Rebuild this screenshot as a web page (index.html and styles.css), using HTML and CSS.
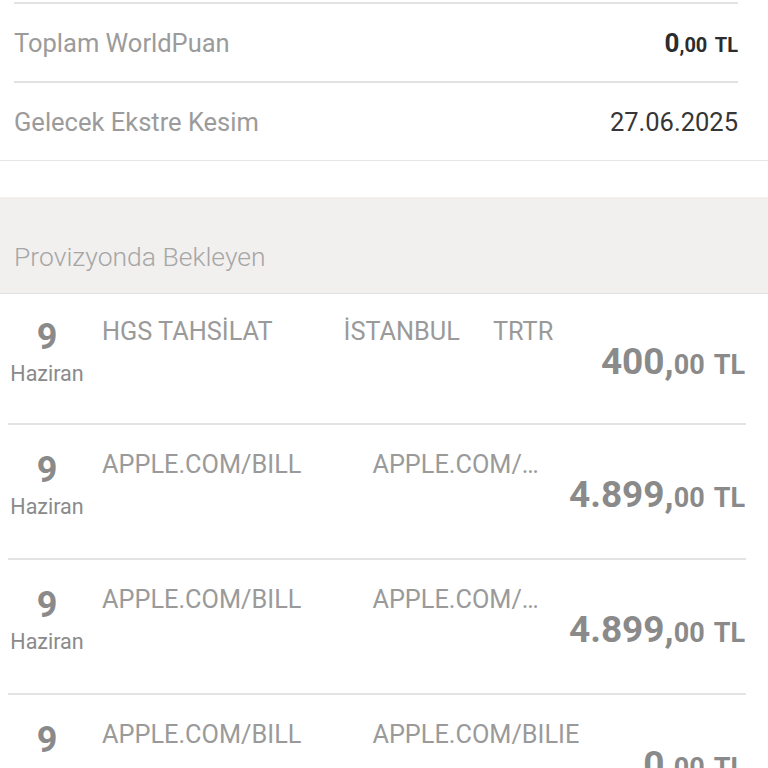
FILE: index.html
```html
<!DOCTYPE html>
<html lang="tr">
<head>
<meta charset="utf-8">
<title>Kart Detayı</title>
<link rel="stylesheet" href="styles.css">
</head>
<body>
<div class="summary">
  <div class="srow">
    <span class="slabel">Toplam WorldPuan</span>
    <span class="svalue strong"><span class="big">0</span><span class="small">,00 TL</span></span>
  </div>
  <div class="srow">
    <span class="slabel">Gelecek Ekstre Kesim</span>
    <span class="svalue">27.06.2025</span>
  </div>
</div>

<div class="section-head">Provizyonda Bekleyen</div>

<div class="list">
  <div class="row">
    <div class="date"><div class="day">9</div><div class="month">Haziran</div></div>
    <div class="desc"><span class="c1">HGS TAHSİLAT</span><span class="c2">İSTANBUL</span><span class="c3">TRTR</span></div>
    <div class="amount"><span class="big">400,</span><span class="small">00 TL</span></div>
  </div>
  <div class="row">
    <div class="date"><div class="day">9</div><div class="month">Haziran</div></div>
    <div class="desc"><span class="c1">APPLE.COM/BILL</span><span class="c2">APPLE.COM/…</span></div>
    <div class="amount"><span class="big">4.899,</span><span class="small">00 TL</span></div>
  </div>
  <div class="row">
    <div class="date"><div class="day">9</div><div class="month">Haziran</div></div>
    <div class="desc"><span class="c1">APPLE.COM/BILL</span><span class="c2">APPLE.COM/…</span></div>
    <div class="amount"><span class="big">4.899,</span><span class="small">00 TL</span></div>
  </div>
  <div class="row">
    <div class="date"><div class="day">9</div><div class="month">Haziran</div></div>
    <div class="desc"><span class="c1">APPLE.COM/BILL</span><span class="c2">APPLE.COM/BILIE</span></div>
    <div class="amount"><span class="big">0,</span><span class="small">00 TL</span></div>
  </div>
</div>
</body>
</html>
```

FILE: styles.css
```css
* { box-sizing: border-box; }

html, body {
  margin: 0;
  padding: 0;
  background: #ffffff;
  font-family: Roboto, "Noto Sans", "Liberation Sans", sans-serif;
  overflow: hidden;
}

.summary {
  padding: 2px 30px 0 14px;
  border-bottom: 1px solid #e6e6e6;
}

.srow {
  height: 79px;
  border-top: 2px solid #e2e2e2;
  display: flex;
  align-items: center;
  justify-content: space-between;
}

.slabel {
  font-size: 25.5px;
  color: #9b9b9b;
}

.svalue {
  font-size: 25.5px;
  color: #363636;
}

.svalue.strong {
  font-weight: 700;
  color: #2c2c2c;
}

.svalue .big { font-size: 26px; }
.svalue .small { font-size: 20px; word-spacing: 3px; }

.section-head {
  margin-top: 36px;
  height: 97px;
  background: #f1f0ef;
  border-bottom: 1px solid #e2e2e2;
  padding: 44px 0 0 14px;
  font-size: 26.5px;
  line-height: 32px;
  font-weight: 300;
  color: #a6a6a6;
}

.list {
  margin: 0 22px 0 8px;
}

.row {
  height: 135px;
  padding-top: 25px;
  border-bottom: 2px solid #e3e3e3;
  display: flex;
  align-items: flex-start;
}

.row:first-child {
  height: 131px;
  padding-top: 23px;
}

.date {
  width: 78px;
  flex: none;
  text-align: center;
  color: #8a8a8a;
}

.day {
  font-size: 36px;
  line-height: 40px;
  font-weight: 700;
}

.month {
  margin-top: 4px;
  font-size: 21.5px;
  line-height: 26px;
}

.desc {
  flex: 1;
  min-width: 0;
  margin-left: 16px;
  display: flex;
  white-space: nowrap;
  overflow: hidden;
  font-size: 25.3px;
  line-height: 30px;
  color: #9a9a9a;
}

.desc .c1 { flex: none; }
.desc .c2 { margin-left: 71px; overflow: hidden; text-overflow: ellipsis; }
.desc .c3 { margin-left: 33px; flex: none; }

.amount {
  flex: none;
  margin-left: 30px;
  margin-top: 25px;
  margin-right: 1px;
  line-height: 40px;
  font-weight: 700;
  color: #8a8a8a;
  white-space: nowrap;
}

.amount .big { font-size: 37px; }
.amount .small { font-size: 27px; word-spacing: 3px; }
```
